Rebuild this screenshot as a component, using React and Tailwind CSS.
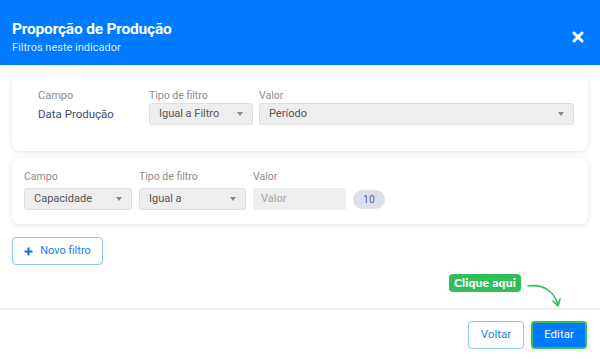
import React from "react";

// small caret used inside the selects
function Caret() {
  return (
    <svg width="6" height="4" viewBox="0 0 6 4" className="shrink-0">
      <path d="M0 0h6L3 4z" fill="#8a8a8a" />
    </svg>
  );
}

function Select({ label, className = "" }) {
  return (
    <div
      className={`flex items-center justify-between h-[22px] px-[9px] rounded-[3px] bg-[#eeeeee] border border-[#dedede] text-[11px] text-[#555] ${className}`}
    >
      <span>{label}</span>
      <Caret />
    </div>
  );
}

export default function App() {
  return (
    <div className="w-[600px] h-[359px] flex flex-col bg-white font-['Roboto',sans-serif] overflow-hidden">
      {/* Header */}
      <header className="h-[65px] shrink-0 bg-[#007bff] flex items-center justify-between pl-[12px] pr-[16px]">
        <div className="flex flex-col pt-[8px]">
          <h1 className="text-[15.5px] leading-[20px] font-bold text-white tracking-[-0.2px]">
            Proporção de Produção
          </h1>
          <p className="text-[11px] leading-[14px] text-[#d6e8ff] mt-[2px]">Filtros neste indicador</p>
        </div>
        <svg width="12" height="12" viewBox="0 0 12 12" className="mt-[8px]">
          <path d="M2 2l8 8M10 2l-8 8" stroke="white" strokeWidth="3" strokeLinecap="round" />
        </svg>
      </header>

      {/* Body */}
      <main className="relative flex-1 flex flex-col px-[12px] pt-[9px]">
        <section className="h-[77px] rounded-[8px] bg-white shadow-[0_1px_5px_rgba(0,0,0,0.12)] pl-[26px] pr-[14px] pt-[15px] flex gap-[6px]">
          <div className="w-[105px] flex flex-col">
            <span className="text-[11px] leading-[14px] text-[#8c8c8c]">Campo</span>
            <span className="mt-[4px] text-[11.5px] leading-[14px] text-[#3e4a75]">Data Produção</span>
          </div>
          <div className="flex flex-col">
            <span className="text-[10.5px] leading-[14px] text-[#8c8c8c]">Tipo de filtro</span>
            <Select label="Igual a Filtro" className="w-[104px]" />
          </div>
          <div className="flex-1 flex flex-col">
            <span className="text-[10.5px] leading-[14px] text-[#8c8c8c]">Valor</span>
            <Select label="Período" />
          </div>
        </section>

        <section className="mt-[7px] h-[66px] rounded-[8px] bg-white shadow-[0_1px_5px_rgba(0,0,0,0.12)] px-[12px] pt-[14px] flex items-end gap-[7px] pb-[14px]">
          <div className="flex flex-col gap-[4px]">
            <span className="text-[10.5px] leading-[14px] text-[#8c8c8c]">Campo</span>
            <Select label="Capacidade" className="w-[108px]" />
          </div>
          <div className="flex flex-col gap-[4px]">
            <span className="text-[10.5px] leading-[14px] text-[#8c8c8c]">Tipo de filtro</span>
            <Select label="Igual a" className="w-[107px]" />
          </div>
          <div className="flex flex-col gap-[4px]">
            <span className="text-[10.5px] leading-[14px] text-[#8c8c8c]">Valor</span>
            <div className="w-[93px] h-[22px] rounded-[3px] bg-[#eeeeee] flex items-center px-[8px] text-[11px] text-[#a8a8a8]">
              Valor
            </div>
          </div>
          <div className="mb-[1px] w-[32px] h-[19px] rounded-full bg-[#dde0e8] text-[10.5px] text-[#5b6588] flex items-center justify-center">
            10
          </div>
        </section>

        <button className="mt-[13px] w-[91px] h-[28px] rounded-[4px] border border-[#8cc2ff] flex items-center justify-center gap-[7px] text-[11px] text-[#1a7cf0]">
          <svg width="9" height="9" viewBox="0 0 9 9">
            <path d="M4.5 0.5v8M0.5 4.5h8" stroke="#0b6fe6" strokeWidth="2" />
          </svg>
          Novo filtro
        </button>

        {/* Callout */}
        <div className="absolute right-[79px] bottom-[16px] h-[18px] px-[5px] rounded-[4px] bg-[#2fbe57] text-white text-[12px] tracking-[0.2px] font-black font-['Lato',sans-serif] flex items-center">
          Clique aqui
        </div>
        <svg className="absolute right-[36px] bottom-[-2px]" width="40" height="30" viewBox="0 0 40 30">
          <path d="M4 6C18 4 30 10 34 25" fill="none" stroke="#2fbe57" strokeWidth="1.6" strokeLinecap="round" />
          <path d="M29 21l5 5 2-7" fill="none" stroke="#2fbe57" strokeWidth="1.6" strokeLinecap="round" strokeLinejoin="round" />
        </svg>
      </main>

      {/* Footer */}
      <footer className="h-[51px] shrink-0 border-t-2 border-[#efefef] flex items-start justify-end gap-[7px] pt-[11px] pr-[13px]">
        <button className="w-[56px] h-[28px] rounded-[4px] border border-[#8cc2ff] text-[11.5px] text-[#1a7cf0] bg-white">
          Voltar
        </button>
        <button className="w-[56px] h-[28px] rounded-[4px] border-2 border-[#2fbe57] bg-[#007bff] text-[11.5px] text-white">
          Editar
        </button>
      </footer>
    </div>
  );
}
